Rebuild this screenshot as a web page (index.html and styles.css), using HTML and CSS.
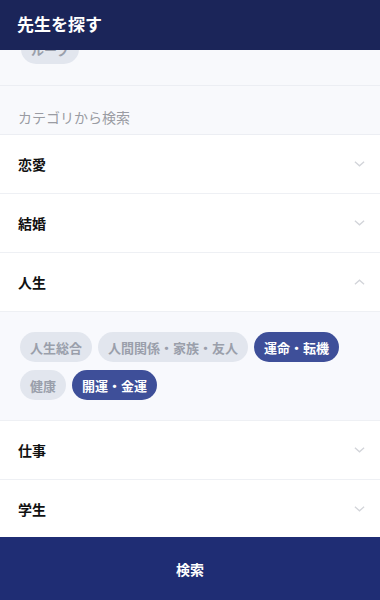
FILE: index.html
```html
<!DOCTYPE html>
<html lang="ja">
<head>
    <meta charset="UTF-8">
    <meta name="viewport" content="width=device-width, initial-scale=1.0">
    <title>先生を探す</title>
    <link rel="stylesheet" href="styles.css">
</head>
<body>
    <div class="app">
        <header class="header">
            <h1>先生を探す</h1>
        </header>

        <main class="content">
            <div class="prev-section">
                <span class="tag tag-cut">ループ</span>
            </div>

            <div class="section-label">カテゴリから検索</div>

            <div class="row">
                <span class="row-title">恋愛</span>
                <svg class="chevron" viewBox="0 0 12 8"><path d="M1 1.5l5 4.5 5-4.5"/></svg>
            </div>
            <div class="row">
                <span class="row-title">結婚</span>
                <svg class="chevron" viewBox="0 0 12 8"><path d="M1 1.5l5 4.5 5-4.5"/></svg>
            </div>
            <div class="row">
                <span class="row-title">人生</span>
                <svg class="chevron" viewBox="0 0 12 8"><path d="M1 6.5l5-4.5 5 4.5"/></svg>
            </div>
            <div class="panel">
                <span class="tag">人生総合</span>
                <span class="tag">人間関係・家族・友人</span>
                <span class="tag tag-on">運命・転機</span>
                <span class="tag">健康</span>
                <span class="tag tag-on">開運・金運</span>
            </div>
            <div class="row">
                <span class="row-title">仕事</span>
                <svg class="chevron" viewBox="0 0 12 8"><path d="M1 1.5l5 4.5 5-4.5"/></svg>
            </div>
            <div class="row row-last">
                <span class="row-title">学生</span>
                <svg class="chevron" viewBox="0 0 12 8"><path d="M1 1.5l5 4.5 5-4.5"/></svg>
            </div>
        </main>

        <button class="search-btn">検索</button>
    </div>
</body>
</html>
```

FILE: styles.css
```css
body {
    margin: 0;
    font-family: "Noto Sans CJK JP", "Noto Sans", sans-serif;
    background-color: #fff;
}
.app {
    display: flex;
    flex-direction: column;
    height: 600px;
    overflow: hidden;
}
.header {
    height: 50px;
    background-color: #1b2559;
    display: flex;
    align-items: center;
    padding: 0 17px;
    flex-shrink: 0;
}
.header h1 {
    margin: 0;
    color: #fff;
    font-size: 17px;
    font-weight: bold;
    margin-top: -3px;
}
.content {
    flex: 1;
    overflow: hidden;
}
.prev-section {
    height: 36px;
    box-sizing: border-box;
    overflow: hidden;
    display: flex;
    align-items: flex-start;
    background-color: #f8f9fc;
    border-bottom: 1px solid #eceef3;
    padding: 0 21px;
}
.tag-cut {
    margin-top: -16px;
    flex-shrink: 0;
}
.section-label {
    height: 49px;
    box-sizing: border-box;
    background-color: #f8f9fc;
    border-bottom: 1px solid #eceef3;
    padding: 21px 18px 0;
    font-size: 14px;
    color: #9a9ca3;
}
.row {
    height: 58px;
    display: flex;
    align-items: center;
    justify-content: space-between;
    padding: 0 15px 0 18px;
    border-bottom: 1px solid #eef0f4;
    background-color: #fff;
}
.row-last {
    border-bottom: none;
}
.row-title {
    font-size: 14px;
    font-weight: bold;
    color: #111;
    margin-top: -1px;
}
.chevron {
    width: 11px;
    height: 8px;
    fill: none;
    stroke: #d2d4d9;
    stroke-width: 1.4;
}
.panel {
    background-color: #f8f9fd;
    border-bottom: 1px solid #eef0f4;
    padding: 20px 20px 20px;
    display: flex;
    flex-wrap: wrap;
    gap: 8px 6px;
}
.tag {
    display: inline-flex;
    align-items: center;
    height: 30px;
    padding: 0 10px;
    border-radius: 15px;
    background-color: #e2e6ee;
    color: #9a9fab;
    font-size: 13px;
    font-weight: bold;
    box-sizing: border-box;
}
.tag-on {
    background-color: #3e4f99;
    color: #fff;
}
.search-btn {
    height: 63px;
    flex-shrink: 0;
    border: none;
    background-color: #1f2d74;
    color: #fff;
    font-family: inherit;
    font-size: 14px;
    font-weight: bold;
    padding: 0;
}
```
